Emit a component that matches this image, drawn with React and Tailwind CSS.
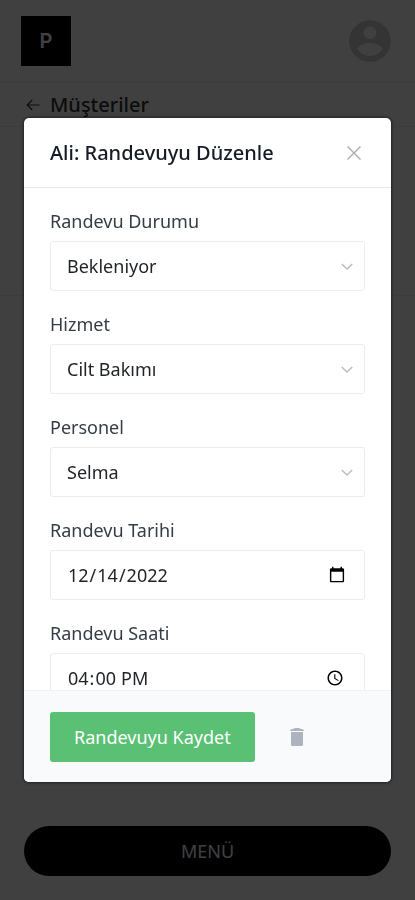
import { useState } from "react";

const statuses = ["Bekleniyor", "Onaylandı", "İptal Edildi"];
const services = ["Cilt Bakımı", "Manikür", "Saç Kesimi"];
const staff = ["Selma", "Ayşe", "Zeynep"];

const controlClass =
  "block h-[50px] w-full appearance-none rounded-[3px] border border-[#ebeced] bg-white px-4 text-[18px] leading-6 text-[#1f2226] outline-none";

function Field({ id, label, children }) {
  return (
    <div>
      <label htmlFor={id} className="mb-2 block text-[18px] leading-6 text-[#343c46]">
        {label}
      </label>
      {children}
    </div>
  );
}

function SelectField({ id, label, value, options, onChange }) {
  return (
    <Field id={id} label={label}>
      <div className="relative">
        <select
          id={id}
          value={value}
          onChange={(e) => onChange(e.target.value)}
          className={controlClass}
        >
          {options.map((option) => (
            <option key={option}>{option}</option>
          ))}
        </select>
        <svg
          viewBox="0 0 12 8"
          className="pointer-events-none absolute top-[22px] right-3 h-2 w-3"
          fill="none"
          stroke="#b9bcc0"
          strokeWidth="1.5"
        >
          <path d="M0.8 1 L6 6 L11.2 1" />
        </svg>
      </div>
    </Field>
  );
}

function Page() {
  return (
    <div className="min-h-screen bg-white">
      <header className="flex h-[83px] items-center justify-between border-b border-[#f0f0f0] pr-5 pl-[21px]">
        <div className="flex size-[50px] items-center justify-center bg-black font-[Inter] text-[20px] font-semibold text-white">
          P
        </div>
        <button type="button" aria-label="Hesap">
          <svg viewBox="0 0 24 24" className="size-[50px]" fill="#d0d0d0">
            <path d="M12 2C6.48 2 2 6.48 2 12s4.48 10 10 10 10-4.48 10-10S17.52 2 12 2zm0 3c1.66 0 3 1.34 3 3s-1.34 3-3 3-3-1.34-3-3 1.34-3 3-3zm0 14.2c-2.5 0-4.71-1.28-6-3.22.03-1.99 4-3.08 6-3.08 1.99 0 5.97 1.09 6 3.08-1.29 1.94-3.5 3.22-6 3.22z" />
          </svg>
        </button>
      </header>
      <nav className="flex h-[44px] items-center border-b border-[#f0f0f0] px-[26px]">
        <a href="#musteriler" className="flex items-center gap-2.5 text-[20px] leading-6 font-medium text-[#333]">
          <svg viewBox="0 0 14 12" className="h-3 w-3.5" fill="none" stroke="currentColor" strokeWidth="1.2">
            <path d="M13.5 6 H1.2 M6.2 1 L1.2 6 L6.2 11" />
          </svg>
          Müşteriler
        </a>
      </nav>
      <div className="h-[169px] border-b border-[#f0f0f0]" />
      <div className="fixed inset-x-6 bottom-6">
        <button type="button" className="h-[50px] w-full rounded-full bg-black text-[18px] text-white">
          MENÜ
        </button>
      </div>
    </div>
  );
}

export default function App() {
  const [status, setStatus] = useState("Bekleniyor");
  const [service, setService] = useState("Cilt Bakımı");
  const [person, setPerson] = useState("Selma");
  const [date, setDate] = useState("2022-12-14");
  const [time, setTime] = useState("16:00");

  return (
    <div className="font-['Noto_Sans',sans-serif]">
      <Page />

      <div className="fixed inset-0 flex items-center justify-center bg-black/75 px-6 py-[118px]">
        <form
          role="dialog"
          aria-labelledby="dialog-title"
          onSubmit={(e) => e.preventDefault()}
          className="flex max-h-full w-full max-w-xl flex-col overflow-hidden rounded-[5px] bg-white shadow-[0_0_3px_1px_rgba(0,0,0,0.5)]"
        >
          <div className="flex h-[70px] shrink-0 items-center justify-between border-b border-[#e6e8ea] px-[26px]">
            <h2 id="dialog-title" className="text-[20px] leading-6 font-medium text-[#151c25]">
              Ali: Randevuyu Düzenle
            </h2>
            <button type="button" aria-label="Kapat" className="p-1">
              <svg viewBox="0 0 14 14" className="size-3.5" fill="none" stroke="#a9acb0" strokeWidth="1.4">
                <path d="M0.5 0.5 L13.5 13.5 M13.5 0.5 L0.5 13.5" />
              </svg>
            </button>
          </div>

          <div className="flex min-h-0 flex-col gap-[21px] overflow-y-auto px-[26px] py-[21px] [scrollbar-width:none]">
            <SelectField id="status" label="Randevu Durumu" value={status} options={statuses} onChange={setStatus} />
            <SelectField id="service" label="Hizmet" value={service} options={services} onChange={setService} />
            <SelectField id="person" label="Personel" value={person} options={staff} onChange={setPerson} />
            <Field id="date" label="Randevu Tarihi">
              <input
                id="date"
                type="date"
                value={date}
                onChange={(e) => setDate(e.target.value)}
                className={controlClass}
              />
            </Field>
            <Field id="time" label="Randevu Saati">
              <input
                id="time"
                type="time"
                value={time}
                onChange={(e) => setTime(e.target.value)}
                className={controlClass}
              />
            </Field>
          </div>

          <div className="flex shrink-0 items-center gap-[34px] border-t border-[#f0f2f4] bg-[#f8fafb] px-[26px] pt-[21px] pb-5">
            <button
              type="submit"
              className="h-[50px] rounded-[3px] bg-[#5ac174] px-6 text-[18px] leading-6 text-white"
            >
              Randevuyu Kaydet
            </button>
            <button type="button" aria-label="Sil">
              <svg viewBox="0 0 16 20" className="h-5 w-4" fill="#adb4bd">
                <path d="M1 4 C1 2.8 2 2.2 4 2 C5 1.2 6 1 8 1 C10 1 11 1.2 12 2 C14 2.2 15 2.8 15 4 Z" />
                <path d="M2 5 H14 V17.4 Q14 19 12.4 19 H3.6 Q2 19 2 17.4 Z" />
              </svg>
            </button>
          </div>
        </form>
      </div>
    </div>
  );
}
